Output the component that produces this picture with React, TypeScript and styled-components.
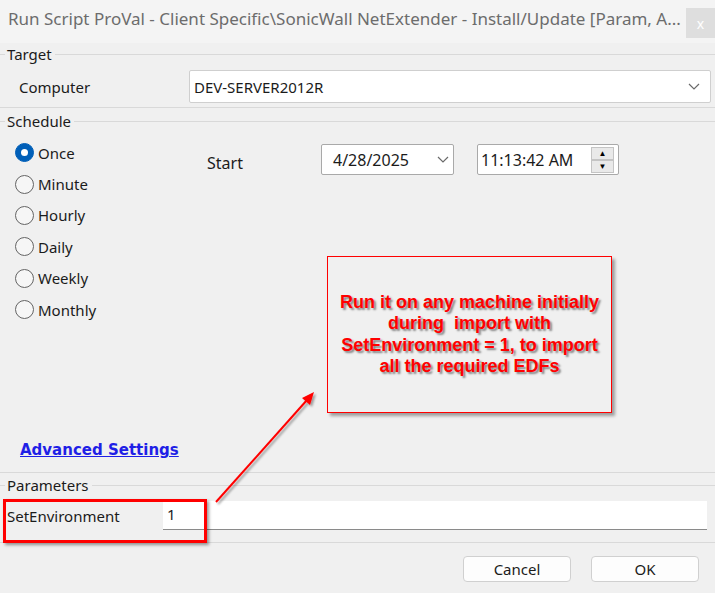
import styled, { createGlobalStyle } from "styled-components";

const GlobalStyle = createGlobalStyle`
  html, body {
    margin: 0;
    padding: 0;
    background: #f0f0f0;
  }
  body {
    font-family: "Noto Sans", "Open Sans", sans-serif;
  }
`;

const Window = styled.div`
  position: relative;
  display: flex;
  flex-direction: column;
  width: 715px;
  height: 593px;
  overflow: hidden;
  background: #f0f0f0;
  color: #1b1b1b;
  font-size: 15px;
`;

const TitleBar = styled.div`
  display: flex;
  align-items: flex-start;
  box-sizing: border-box;
  height: 43px;
  padding-left: 8px;
  background: #f4f4f4;
`;

const Title = styled.div`
  flex: 1;
  margin-top: 8px;
  font-size: 17px;
  line-height: 22px;
  color: #6c6c6c;
  white-space: nowrap;
  overflow: hidden;
`;

const CloseButton = styled.div`
  display: flex;
  align-items: center;
  justify-content: center;
  width: 29px;
  height: 30px;
  margin-top: 8px;
  background: #dedede;
  color: #ffffff;
  font-size: 14px;
`;

const Group = styled.section<{ $pad: number }>`
  padding-bottom: ${(p) => p.$pad}px;
  border-bottom: 1px solid #d9d9d9;
`;

const GroupHeader = styled.div<{ $top: number }>`
  display: flex;
  align-items: center;
  height: 16px;
  margin-top: ${(p) => p.$top}px;
  line-height: 16px;

  &::before {
    content: "";
    width: 5px;
    border-top: 1px solid #d9d9d9;
  }
  &::after {
    content: "";
    flex: 1;
    border-top: 1px solid #d9d9d9;
  }
  span {
    padding: 0 3px 0 2px;
  }
`;

const FieldRow = styled.div<{ $left: number; $right: number }>`
  display: flex;
  align-items: center;
  margin-top: 8px;
  padding: 0 ${(p) => p.$right}px 0 ${(p) => p.$left}px;
`;

const FieldLabel = styled.div<{ $width: number }>`
  width: ${(p) => p.$width}px;
`;

const Select = styled.div`
  display: flex;
  align-items: center;
  justify-content: space-between;
  flex: 1;
  box-sizing: border-box;
  height: 33px;
  padding: 0 10px 0 4px;
  background: #ffffff;
  border: 1px solid #cfcfcf;
  border-radius: 2px;
`;

const ScheduleBody = styled.div`
  display: grid;
  grid-template-columns: 192px auto;
  padding: 8px 0 0 15px;
`;

const RadioList = styled.div`
  display: flex;
  flex-direction: column;
`;

const RadioItem = styled.div`
  display: flex;
  align-items: center;
  gap: 4px;
  height: 31.4px;
`;

const RadioDot = styled.span<{ $checked?: boolean }>`
  display: flex;
  align-items: center;
  justify-content: center;
  box-sizing: border-box;
  width: 19px;
  height: 19px;
  border-radius: 50%;
  border: 1px solid ${(p) => (p.$checked ? "#005fb8" : "#646464")};
  background: ${(p) => (p.$checked ? "#005fb8" : "#f6f6f6")};

  &::after {
    content: "";
    display: ${(p) => (p.$checked ? "block" : "none")};
    width: 7px;
    height: 7px;
    border-radius: 50%;
    background: #ffffff;
  }
`;

const StartPanel = styled.div`
  display: flex;
  align-items: flex-start;
  margin-top: 7px;
`;

const StartLabel = styled.div`
  width: 114px;
  margin-top: 8px;
  font-size: 16px;
  line-height: 22px;
`;

const Picker = styled.div<{ $width: number; $padLeft: number }>`
  display: flex;
  align-items: center;
  justify-content: space-between;
  box-sizing: border-box;
  width: ${(p) => p.$width}px;
  height: 31px;
  margin-right: 23px;
  padding: 0 4px 0 ${(p) => p.$padLeft}px;
  background: #ffffff;
  border: 1px solid #a9a9a9;
  border-radius: 2px;
  font-size: 16px;
`;

const Spinner = styled.div`
  display: flex;
  flex-direction: column;
  width: 23px;
`;

const SpinButton = styled.div`
  display: flex;
  align-items: center;
  justify-content: center;
  height: 11px;
  background: #e9e9e9;
  border: 1px solid #c4c4c4;
  font-size: 8px;
  line-height: 8px;
  color: #000000;
`;

const LinkRow = styled.div`
  grid-column: 1 / -1;
  margin-top: 114px;
  padding-left: 5px;
`;

const AdvancedLink = styled.a`
  font-family: "DejaVu Sans", sans-serif;
  font-weight: bold;
  font-size: 15px;
  line-height: 20px;
  color: #1f1fe6;
  text-decoration: underline;
  cursor: pointer;
`;

const ParamInput = styled.div`
  flex: 1;
  box-sizing: border-box;
  height: 29px;
  padding: 3px 4px;
  background: #ffffff;
  border-bottom: 1px solid #8a8a8a;
  font-size: 15px;
`;

const Footer = styled.div`
  display: flex;
  justify-content: flex-end;
  gap: 20px;
  padding: 13px 16px 0 0;
`;

const Button = styled.button`
  box-sizing: border-box;
  width: 108px;
  height: 26px;
  background: #fdfdfd;
  border: 1px solid #d0d0d0;
  border-radius: 4px;
  font-family: "Noto Sans", sans-serif;
  font-size: 15px;
  color: #1b1b1b;
`;

const Callout = styled.div`
  position: absolute;
  left: 327px;
  top: 256px;
  display: flex;
  align-items: center;
  justify-content: center;
  box-sizing: border-box;
  width: 285px;
  height: 157px;
  border: 1px solid #ff0000;
  box-shadow: 3px 3px 3px rgba(0, 0, 0, 0.35);
  font-family: "Liberation Sans", Arial, sans-serif;
  font-weight: bold;
  font-size: 18px;
  line-height: 21.5px;
  text-align: center;
  color: #ff0000;
  text-shadow: 2px 2px 2px rgba(0, 0, 0, 0.45);
`;

const Highlight = styled.div`
  position: absolute;
  left: 3px;
  top: 499px;
  box-sizing: border-box;
  width: 204px;
  height: 44px;
  border: 3px solid #ff0000;
  box-shadow: 2px 2px 3px rgba(0, 0, 0, 0.4);
`;

const ArrowLayer = styled.svg`
  position: absolute;
  left: 0;
  top: 0;
  pointer-events: none;
`;

const Chevron = () => (
  <svg width="12" height="7" viewBox="0 0 12 7">
    <polyline points="1,1 6,6 11,1" fill="none" stroke="#6a6a6a" strokeWidth="1.2" />
  </svg>
);

const frequencies = ["Once", "Minute", "Hourly", "Daily", "Weekly", "Monthly"];

const App = () => {
  return (
    <>
      <GlobalStyle />
      <Window>
        <TitleBar>
          <Title>Run Script ProVal - Client Specific\SonicWall NetExtender - Install/Update [Param, A...</Title>
          <CloseButton>x</CloseButton>
        </TitleBar>

        <Group $pad={4}>
          <GroupHeader $top={3}>
            <span>Target</span>
          </GroupHeader>
          <FieldRow $left={19} $right={4}>
            <FieldLabel $width={170}>Computer</FieldLabel>
            <Select>
              <span>DEV-SERVER2012R</span>
              <Chevron />
            </Select>
          </FieldRow>
        </Group>

        <Group $pad={12}>
          <GroupHeader $top={5}>
            <span>Schedule</span>
          </GroupHeader>
          <ScheduleBody>
            <RadioList>
              {frequencies.map((f, i) => (
                <RadioItem key={f}>
                  <RadioDot $checked={i === 0} />
                  <span>{f}</span>
                </RadioItem>
              ))}
            </RadioList>
            <StartPanel>
              <StartLabel>Start</StartLabel>
              <Picker $width={133} $padLeft={11}>
                <span>4/28/2025</span>
                <Chevron />
              </Picker>
              <Picker $width={142} $padLeft={3}>
                <span>11:13:42 AM</span>
                <Spinner>
                  <SpinButton>▲</SpinButton>
                  <SpinButton>▼</SpinButton>
                </Spinner>
              </Picker>
            </StartPanel>
            <LinkRow>
              <AdvancedLink>Advanced Settings</AdvancedLink>
            </LinkRow>
          </ScheduleBody>
        </Group>

        <Group $pad={12}>
          <GroupHeader $top={4}>
            <span>Parameters</span>
          </GroupHeader>
          <FieldRow $left={7} $right={8}>
            <FieldLabel $width={156}>SetEnvironment</FieldLabel>
            <ParamInput>1</ParamInput>
          </FieldRow>
        </Group>

        <Footer>
          <Button>Cancel</Button>
          <Button>OK</Button>
        </Footer>

        <Callout>
          <div>
            Run it on any machine initially
            <br />
            during&nbsp; import with
            <br />
            SetEnvironment = 1, to import
            <br />
            all the required EDFs
          </div>
        </Callout>

        <ArrowLayer width="715" height="593" viewBox="0 0 715 593">
          <defs>
            <filter id="arrowShadow" x="-20%" y="-20%" width="140%" height="140%">
              <feDropShadow dx="2" dy="2" stdDeviation="1" floodOpacity="0.35" />
            </filter>
          </defs>
          <g filter="url(#arrowShadow)">
            <line x1="216" y1="502" x2="307" y2="400" stroke="#ff0000" strokeWidth="2" />
            <polygon points="314,392 310,405 302,398" fill="#ff0000" />
          </g>
        </ArrowLayer>

        <Highlight />
      </Window>
    </>
  );
};

export default App;
